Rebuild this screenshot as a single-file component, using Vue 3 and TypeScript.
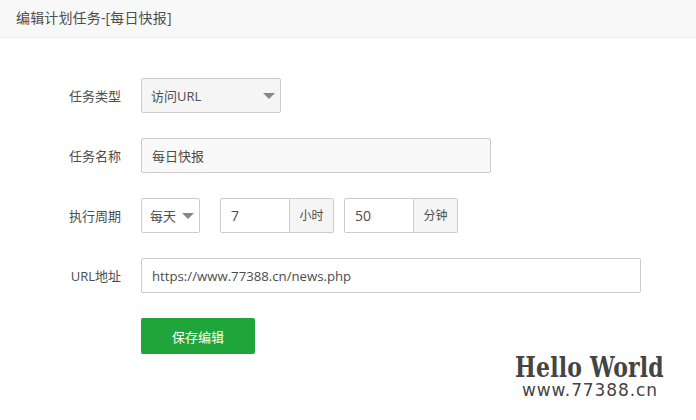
<script setup lang="ts">
import { ref } from 'vue'

const taskName = ref('每日快报')
const hour = ref('7')
const minute = ref('50')
const url = ref('https://www.77388.cn/news.php')
</script>

<template>
  <div class="page">
    <header class="head">编辑计划任务-[每日快报]</header>
    <form class="form" @submit.prevent>
      <div class="row">
        <label class="label">任务类型</label>
        <div class="select select-type">
          <span>访问URL</span>
          <i class="arrow"></i>
        </div>
      </div>
      <div class="row">
        <label class="label">任务名称</label>
        <input v-model="taskName" class="input input-name" />
      </div>
      <div class="row">
        <label class="label">执行周期</label>
        <div class="select select-cycle">
          <span>每天</span>
          <i class="arrow"></i>
        </div>
        <div class="group group-first">
          <input v-model="hour" class="input input-num" />
          <span class="addon">小时</span>
        </div>
        <div class="group group-second">
          <input v-model="minute" class="input input-num" />
          <span class="addon">分钟</span>
        </div>
      </div>
      <div class="row">
        <label class="label">URL地址</label>
        <input v-model="url" class="input input-url" />
      </div>
      <div class="row row-action">
        <button class="save" type="submit">保存编辑</button>
      </div>
    </form>
    <div class="mark">
      <div class="mark-title">Hello World</div>
      <div class="mark-site">www.77388.cn</div>
    </div>
  </div>
</template>

<style>
html,
body {
  background: #fff;
}
</style>

<style scoped>
.page {
  position: relative;
  width: 696px;
  height: 420px;
  overflow: hidden;
  background: #fff;
  color: #4d4d4d;
  font-family: "Open Sans", "Noto Sans CJK SC", sans-serif;
  font-size: 13px;
}
.head {
  box-sizing: border-box;
  height: 38px;
  padding-left: 16px;
  line-height: 35px;
  background: #f8f8f8;
  border-bottom: 1px solid #ececec;
  font-size: 14px;
  letter-spacing: 0.15px;
}
.form {
  display: flex;
  flex-direction: column;
  gap: 25px;
  padding-top: 40px;
}
.row {
  display: flex;
  align-items: center;
  height: 35px;
}
.row-action {
  height: 36px;
}
.label {
  width: 121px;
  margin-right: 20px;
  text-align: right;
}
.select {
  box-sizing: border-box;
  display: flex;
  align-items: center;
  justify-content: space-between;
  height: 35px;
  border: 1px solid #ccc;
  border-radius: 2px;
}
.select-type {
  width: 140px;
  padding: 0 5px 0 9px;
  background: #f5f5f5;
}
.select-cycle {
  width: 59px;
  padding: 0 5px 0 8px;
  background: #fff;
}
.arrow {
  width: 0;
  height: 0;
  border-left: 6px solid transparent;
  border-right: 6px solid transparent;
  border-top: 6px solid #888;
}
.input {
  box-sizing: border-box;
  height: 35px;
  padding: 0 10px;
  border: 1px solid #ccc;
  border-radius: 2px;
  outline: none;
  background: #fff;
  color: #4d4d4d;
  font: inherit;
}
.input-name {
  width: 350px;
  background: #f9f9f9;
}
.input-url {
  width: 500px;
  font-size: 13.2px;
}
.group {
  display: flex;
}
.group-first {
  margin-left: 20px;
}
.group-second {
  margin-left: 10px;
}
.input-num {
  width: 70px;
  border-radius: 2px 0 0 2px;
  font-size: 14px;
}
.addon {
  box-sizing: border-box;
  width: 44px;
  height: 35px;
  line-height: 33px;
  text-align: center;
  border: 1px solid #ccc;
  border-left: 0;
  border-radius: 0 2px 2px 0;
  background: #f5f5f5;
  font-size: 12px;
}
.save {
  width: 114px;
  height: 36px;
  margin-left: 141px;
  border: 0;
  border-radius: 2px;
  background: #20a53a;
  color: #fff;
  font: inherit;
}
.mark {
  position: absolute;
  left: 515px;
  top: 357px;
  width: 150px;
  color: #444;
}
.mark-title {
  font-family: "DejaVu Serif", serif;
  font-weight: 700;
  font-size: 22px;
  line-height: 20px;
  letter-spacing: 0.2px;
  transform: scaleY(1.3);
  transform-origin: center;
  white-space: nowrap;
}
.mark-site {
  margin-top: 5px;
  margin-left: 7px;
  font-family: "DejaVu Sans", sans-serif;
  font-size: 17px;
  line-height: 17px;
  letter-spacing: 0.9px;
  white-space: nowrap;
}
</style>
